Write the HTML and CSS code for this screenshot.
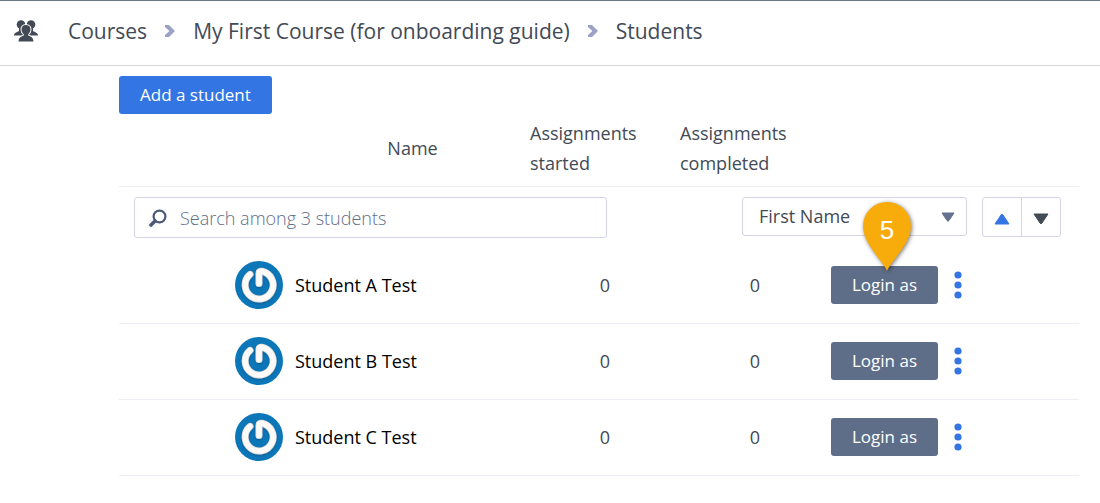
FILE: index.html
```html
<!DOCTYPE html>
<html lang="en">
<head>
<meta charset="utf-8">
<title>Students</title>
<link rel="stylesheet" href="styles.css">
</head>
<body>
<svg class="defs" width="0" height="0" aria-hidden="true">
  <defs>
    <filter id="soft" x="-20%" y="-20%" width="140%" height="140%"><feDropShadow dx="0" dy="1" stdDeviation="0.8" flood-color="#064a78" flood-opacity="0.6"/></filter>
    <symbol id="avatar" viewBox="0 0 48 48">
      <circle cx="24" cy="24" r="24" fill="#0b76b8"/>
      <g fill="none" stroke-linecap="round" stroke-linejoin="round" filter="url(#soft)">
        <path d="M15 13.400A14 14 0 1 0 27 10.300Q24 9.700 24 12V22.500" stroke="#d5d8d8" stroke-width="7"/>
        <path d="M15 13.400A14 14 0 1 0 27 10.300Q24 9.700 24 12V22.500" stroke="#fbfaf8" stroke-width="5.600"/>
      </g>
    </symbol>
    <symbol id="chevron" viewBox="0 0 10 12"><path d="M0 0H4L10 6 4 12H0V10L4.400 6 0 2Z" fill="#9aa3c6"/></symbol>
    <symbol id="dots" viewBox="0 0 8 28"><g fill="#3475e4"><circle cx="4" cy="4" r="3.600"/><circle cx="4" cy="14" r="3.600"/><circle cx="4" cy="24" r="3.600"/></g></symbol>
  </defs>
</svg>
<header class="topbar">
  <svg class="people" viewBox="0 0 24 22" aria-hidden="true">
    <g fill="#424a56">
      <circle cx="7" cy="4.500" r="4.300"/><circle cx="17" cy="4.500" r="4.300"/>
      <path d="M0 15.500C0 12.500 3 12.400 5 11V8H19V11C21 12.400 24 12.500 24 15.500Z"/>
    </g>
    <path d="M12 5C9 5 7.300 7 7.500 9.700 7.600 11.500 8.600 13.200 9.800 14.200V15.500C7.500 16.500 4.600 17 4.600 21.500H19.400C19.400 17 16.500 16.500 14.200 15.500V14.200C15.400 13.200 16.400 11.500 16.500 9.700 16.700 7 15 5 12 5Z" fill="#424a56" stroke="#fff" stroke-width="2" paint-order="stroke"/>
  </svg>
  <nav class="crumbs" aria-label="Breadcrumb">
    <a href="#">Courses</a>
    <svg class="chevron" aria-hidden="true"><use href="#chevron"/></svg>
    <a href="#">My First Course (for onboarding guide)</a>
    <svg class="chevron" aria-hidden="true"><use href="#chevron"/></svg>
    <a href="#" aria-current="page">Students</a>
  </nav>
</header>
<main class="content">
  <button class="button add" type="button">Add a student</button>
  <table class="students">
    <colgroup><col class="col-avatar"><col><col class="col-count"><col class="col-count"><col class="col-actions"></colgroup>
    <thead>
      <tr class="heads">
        <td></td>
        <th class="name-head" scope="col">Name</th>
        <th scope="col">Assignments started</th>
        <th scope="col">Assignments completed</th>
        <td></td>
      </tr>
      <tr>
        <td colspan="5">
          <div class="toolbar">
            <label class="search">
              <svg class="lens" viewBox="0 0 18 18" aria-hidden="true"><circle cx="10.500" cy="7.500" r="5.900" fill="none" stroke="#4d5878" stroke-width="2.200"/><path d="M6 12L2 16" stroke="#4d5878" stroke-width="3.600" stroke-linecap="round"/></svg>
              <input type="search" placeholder="Search among 3 students" aria-label="Search among students">
            </label>
            <div class="sorting">
              <div class="select">
                <select aria-label="Sort by"><option>First Name</option></select>
                <svg class="caret" viewBox="0 0 14 10" aria-hidden="true"><path d="M1 1H13L8 8.500Q7 10 6 8.500Z" fill="#66718f" stroke="#66718f" stroke-linejoin="round"/></svg>
              </div>
              <div class="order">
                <button type="button" aria-label="Ascending"><svg viewBox="0 0 16 12" aria-hidden="true"><path d="M1 11L7 2Q8 .5 9 2L15 11Z" fill="#3475e4" stroke="#3475e4" stroke-linejoin="round"/></svg></button>
                <button type="button" aria-label="Descending"><svg viewBox="0 0 16 12" aria-hidden="true"><path d="M1 1H15L9 10Q8 11.500 7 10Z" fill="#424a56" stroke="#424a56" stroke-linejoin="round"/></svg></button>
              </div>
            </div>
          </div>
        </td>
      </tr>
    </thead>
    <tbody>
      <tr>
        <td><svg class="avatar" aria-hidden="true"><use href="#avatar"/></svg></td>
        <td class="student">Student A Test</td><td class="count">0</td><td class="count">0</td>
        <td><div class="actions">
          <button class="button login" type="button">Login as</button>
          <button class="more" type="button" aria-label="More actions"><svg aria-hidden="true"><use href="#dots"/></svg></button>
          <div class="pin"><svg viewBox="0 0 48 69" aria-hidden="true"><path d="M24 69C20 59 0 42 0 24A24 24 0 0 1 48 24C48 42 28 59 24 69Z" fill="#f8ac0b"/></svg><span>5</span></div>
        </div></td>
      </tr>
      <tr>
        <td><svg class="avatar" aria-hidden="true"><use href="#avatar"/></svg></td>
        <td class="student">Student B Test</td><td class="count">0</td><td class="count">0</td>
        <td><div class="actions">
          <button class="button login" type="button">Login as</button>
          <button class="more" type="button" aria-label="More actions"><svg aria-hidden="true"><use href="#dots"/></svg></button>
        </div></td>
      </tr>
      <tr>
        <td><svg class="avatar" aria-hidden="true"><use href="#avatar"/></svg></td>
        <td class="student">Student C Test</td><td class="count">0</td><td class="count">0</td>
        <td><div class="actions">
          <button class="button login" type="button">Login as</button>
          <button class="more" type="button" aria-label="More actions"><svg aria-hidden="true"><use href="#dots"/></svg></button>
        </div></td>
      </tr>
    </tbody>
  </table>
</main>
</body>
</html>
```
FILE: styles.css
```css
* { box-sizing: border-box; }
body {
  margin: 0;
  background: #fff;
  color: #424a56;
  font: 18px/30px "Open Sans", sans-serif;
}
button, input, select { font: inherit; }
button { cursor: pointer; }
svg { display: block; flex: none; }
.defs { position: absolute; }

.topbar {
  display: flex;
  align-items: center;
  gap: 30px;
  padding: 15px 14px 19px;
  border-top: 1px solid #6c7886;
  border-bottom: 1px solid #d5d6e2;
}
.people { width: 24px; height: 22px; }
.crumbs { display: flex; align-items: center; gap: 18px; font-size: 21px; }
.crumbs a { color: inherit; text-decoration: none; white-space: nowrap; }
.chevron { width: 10px; height: 12px; }

.content { padding: 10px 21px 24px 119px; }
.button {
  padding: 0 21px;
  border: 0;
  border-radius: 3px;
  color: #fff;
  font-size: 17px;
  line-height: 38px;
  white-space: nowrap;
}
.add { display: block; background: #3475e4; }
.login { background: #5f6e88; }

.students { width: 100%; margin-top: 4px; table-layout: fixed; border-collapse: separate; border-spacing: 0; }
.students th, .students td { padding: 0; font-weight: 400; text-align: left; vertical-align: middle; }
.col-avatar { width: 176px; }
.col-count { width: 150px; }
.col-actions { width: 249px; }
.heads > * { height: 69px; border-bottom: 1px solid #ededf5; }
.students .heads th { padding-bottom: 8px; }
.students .name-head, .students .count { text-align: center; }
.students tbody td { height: 76px; padding-bottom: 2px; border-bottom: 1px solid #ededf5; }
.avatar { width: 48px; height: 48px; margin: 0 12px 0 auto; }
.student { color: #000; }

.toolbar { display: flex; justify-content: space-between; gap: 24px; padding: 10px 18px 10px 15px; }
.search {
  display: flex;
  align-items: center;
  flex: 0 1 473px;
  gap: 13px;
  height: 41px;
  padding: 0 14px;
  border: 1px solid #d3d5e6;
  border-radius: 3px;
}
.lens { width: 18px; height: 18px; }
.search input { flex: 1; min-width: 0; padding: 0; border: 0; outline: 0; color: #424a56; font-weight: 300; }
.search input::placeholder { color: #5f6e88; opacity: 1; }
.sorting { display: flex; gap: 15px; }
.select { display: grid; align-items: center; width: 225px; height: 39px; }
.select > * { grid-area: 1 / 1; }
.select select {
  appearance: none;
  width: 100%;
  height: 39px;
  padding: 0 40px 2px 16px;
  border: 1px solid #d3d5e6;
  border-radius: 3px;
  background: #fff;
  color: #424a56;
}
.caret { width: 14px; height: 10px; margin-right: 12px; justify-self: end; z-index: 1; pointer-events: none; }
.order { display: flex; width: 79px; height: 40px; border: 1px solid #d3d5e6; border-radius: 3px; }
.order button { display: flex; flex: 1; align-items: center; justify-content: center; padding: 3px 0 0; border: 0; background: none; }
.order button + button { border-left: 1px solid #d3d5e6; }
.order svg { width: 16px; height: 12px; }

.actions { position: relative; display: flex; align-items: center; gap: 16px; padding-left: 1px; }
.more { padding: 0; border: 0; background: none; }
.more svg { width: 8px; height: 28px; }
.pin { position: absolute; left: 33px; bottom: 33px; z-index: 2; width: 48px; height: 69px; }
.pin svg { width: 48px; height: 69px; filter: drop-shadow(1px 1px 2px #0008); }
.pin span {
  position: absolute;
  inset: 13px 0 auto;
  color: #fff;
  font: 26px/30px "Liberation Sans", sans-serif;
  text-align: center;
}
```
